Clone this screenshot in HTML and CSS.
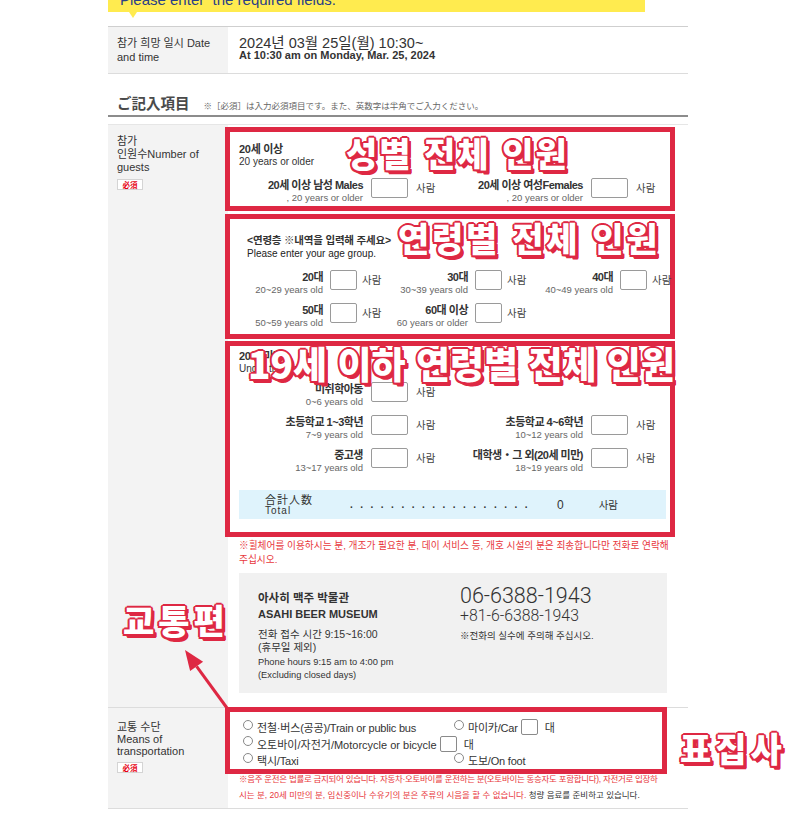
FILE: index.html
```html
<!DOCTYPE html>
<html lang="ko">
<head>
<meta charset="utf-8">
<title>참가 신청</title>
<link rel="stylesheet" href="styles.css">
</head>
<body>
<div class="page">
  <div class="alert">Please enter&nbsp; the required fields.</div>

  <div class="row row-date">
    <div class="label">참가 희망 일시 Date<br>and time</div>
    <div class="value date">
      <div class="date-ko">2024년 03월 25일(월) 10:30~</div>
      <div class="date-en">At 10:30 am on Monday, Mar. 25, 2024</div>
    </div>
  </div>

  <div class="section-head">
    <h2>ご記入項目</h2>
    <span class="head-note">※［必須］は入力必須項目です。また、英数字は半角でご入力ください。</span>
  </div>

  <div class="row row-guests">
    <div class="label">참가<br>인원수Number of<br>guests<span class="req">必須</span></div>
    <div class="value guests">
      <div class="mark box-adult">
        <div class="head"><b>20세 이상</b><span>20 years or older</span></div>
        <div class="pairs two">
          <div class="pair"><div class="lbl"><b>20세 이상 남성 Males</b><small>, 20 years or older</small></div><span class="inp"></span><span class="unit">사람</span></div>
          <div class="pair"><div class="lbl"><b>20세 이상 여성Females</b><small>, 20 years or older</small></div><span class="inp"></span><span class="unit">사람</span></div>
        </div>
      </div>

      <div class="mark box-age">
        <div class="head age-head"><b>&lt;연령층 ※내역을 입력해 주세요&gt;</b><span>Please enter your age group.</span></div>
        <div class="pairs three first">
          <div class="pair"><div class="lbl"><b>20대</b><small>20~29 years old</small></div><span class="inp"></span><span class="unit">사람</span></div>
          <div class="pair"><div class="lbl"><b>30대</b><small>30~39 years old</small></div><span class="inp"></span><span class="unit">사람</span></div>
          <div class="pair"><div class="lbl"><b>40대</b><small>40~49 years old</small></div><span class="inp"></span><span class="unit">사람</span></div>
        </div>
        <div class="pairs three">
          <div class="pair"><div class="lbl"><b>50대</b><small>50~59 years old</small></div><span class="inp"></span><span class="unit">사람</span></div>
          <div class="pair"><div class="lbl"><b>60대 이상</b><small>60 years or older</small></div><span class="inp"></span><span class="unit">사람</span></div>
        </div>
      </div>

      <div class="mark box-child">
        <div class="head"><b>20세 미만</b><span>Under the age of 20</span></div>
        <div class="pairs two first">
          <div class="pair"><div class="lbl"><b>미취학아동</b><small>0~6 years old</small></div><span class="inp"></span><span class="unit">사람</span></div>
        </div>
        <div class="pairs two">
          <div class="pair"><div class="lbl"><b>초등학교 1~3학년</b><small>7~9 years old</small></div><span class="inp"></span><span class="unit">사람</span></div>
          <div class="pair"><div class="lbl"><b>초등학교 4~6학년</b><small>10~12 years old</small></div><span class="inp"></span><span class="unit">사람</span></div>
        </div>
        <div class="pairs two">
          <div class="pair"><div class="lbl"><b>중고생</b><small>13~17 years old</small></div><span class="inp"></span><span class="unit">사람</span></div>
          <div class="pair"><div class="lbl"><b>대학생・그 외(20세 미만)</b><small>18~19 years old</small></div><span class="inp"></span><span class="unit">사람</span></div>
        </div>
        <div class="total">
          <div class="total-lbl"><span class="t-ja">合計人数</span><span class="t-en">Total</span></div>
          <span class="dots">..................</span>
          <span class="t-num">0</span>
          <span class="t-unit">사람</span>
        </div>
      </div>

      <p class="wnote">※휠체어를 이용하시는 분, 개조가 필요한 분, 데이 서비스 등, 개호 시설의 분은 죄송합니다만 전화로 연락해<br>주십시오.</p>

      <div class="contact">
        <div class="c-left">
          <div class="c-name">아사히 맥주 박물관</div>
          <div class="c-en">ASAHI BEER MUSEUM</div>
          <div class="c-hours">전화 접수 시간 9:15~16:00<br>(휴무일 제외)</div>
          <div class="c-hours-en">Phone hours 9:15 am to 4:00 pm<br>(Excluding closed days)</div>
        </div>
        <div class="c-right">
          <div class="c-tel">06-6388-1943</div>
          <div class="c-tel2">+81-6-6388-1943</div>
          <div class="c-note">※전화의 실수에 주의해 주십시오.</div>
        </div>
      </div>
    </div>
  </div>

  <div class="row row-trans">
    <div class="label lbl-trans">교통 수단<br>Means of<br>transportation<span class="req">必須</span></div>
    <div class="value trans">
      <div class="mark box-trans">
        <div class="opts">
          <div class="opt"><span class="radio"></span>전철·버스(공공)/Train or public bus</div>
          <div class="opt"><span class="radio"></span>마이카/Car<span class="sinp"></span><span class="dae">대</span></div>
          <div class="opt wide"><span class="radio"></span>오토바이/자전거/Motorcycle or bicycle<span class="sinp"></span><span class="dae">대</span></div>
          <div class="opt"><span class="radio"></span>택시/Taxi</div>
          <div class="opt"><span class="radio"></span>도보/On foot</div>
        </div>
      </div>
      <p class="tnote"><span class="red"><span class="tight">※음주 운전은 법률로 금지되어 있습니다. 자동차·오토바이를 운전하는 분(오토바이는 동승자도 포함합니다), 자전거로 입장하</span><br>시는 분, 20세 미만의 분, 임신중이나 수유기의 분은 주류의 시음을 할 수 없습니다.</span> 청량 음료를 준비하고 있습니다.</p>
    </div>
  </div>
</div>

<div class="anno a-gender">성별 전체 인원</div>
<div class="anno a-age">연령별 전체 인원</div>
<div class="anno a-child">19세 이하 연령별 전체 인원</div>
<div class="anno a-trans">교통편</div>
<div class="anno a-sample">표집사</div>
<svg class="arrow" width="60" height="72" viewBox="0 0 60 72">
  <line x1="52" y1="68" x2="21.6" y2="26.3" stroke="#de2843" stroke-width="3"/>
  <polygon points="10,10 28.1,21.7 15.1,30.9" fill="#de2843"/>
</svg>
</body>
</html>
```

FILE: styles.css
```css
* { box-sizing: border-box; }
html, body { margin: 0; padding: 0; background: #fff; }
body {
  font-family: "Liberation Sans", "Noto Sans CJK KR", sans-serif;
  color: #333;
}
.page { width: 688px; padding-left: 108px; }

.alert {
  position: relative;
  width: 537px;
  height: 12px;
  margin-bottom: 14px;
  padding-left: 12px;
  background: #ffeb4f;
  color: #2a3f86;
  font-size: 15px;
  line-height: 0;
  white-space: nowrap;
}
.alert::after {
  content: "";
  position: absolute;
  left: 21px;
  top: 12px;
  border-left: 4px solid transparent;
  border-right: 4px solid transparent;
  border-top: 6px solid #ffeb4f;
}

.row { display: flex; width: 580px; }
.label {
  width: 120px;
  flex: none;
  background: #f3f3f3;
  padding: 9px 9px;
  font-size: 11px;
  line-height: 14px;
  color: #333;
}
.value { flex: 1; padding-left: 11px; }

.row-date { border-top: 1px solid #cfcfcf; border-bottom: 1px solid #dcdcdc; }
.date { padding-top: 10px; }
.date-ko { font-size: 14.5px; line-height: 13px; color: #333; }
.date-en { font-size: 11px; line-height: 11px; font-weight: bold; color: #333; }

.section-head {
  display: flex;
  align-items: baseline;
  width: 580px;
  margin-top: 19px;
  padding: 0 0 2px 9px;
  border-bottom: 2px solid #8c8c8c;
}
.section-head h2 {
  margin: 0;
  font-family: "Noto Sans CJK JP", sans-serif;
  font-size: 14.5px;
  line-height: 20px;
  font-weight: 700;
  color: #4a4a4a;
}
.head-note {
  margin-left: 14px;
  font-family: "Liberation Sans", "Noto Sans CJK JP", sans-serif;
  font-size: 8.5px;
  color: #666;
}

.row-guests { margin-top: 7px; border-top: 1px solid #e6e6e6; border-bottom: 1px solid #dcdcdc; }
.row-guests .label { padding-top: 10px; line-height: 13px; }
.req {
  display: block;
  width: 26px;
  height: 11px;
  margin-top: 5px;
  border: 1px solid #d4d4d4;
  background: #fff;
  color: #e60012;
  font-family: "Noto Sans CJK JP", sans-serif;
  font-size: 7.5px;
  font-weight: bold;
  line-height: 9px;
  text-align: center;
}
.guests { padding-left: 0; padding-bottom: 14px; }

.mark {
  position: relative;
  z-index: 1;
  margin-left: -3px;
  border: 5px solid #de2843;
}
.box-adult { width: 450px; margin-top: 2px; padding: 11px 4px 3px 9px; }
.box-age { width: 450px; margin-top: 3px; padding: 15px 4px 6px 9px; }
.box-child { width: 450px; margin-top: 2px; padding: 4px 4px 13px 9px; }

.head b { display: block; font-size: 11px; line-height: 13px; color: #333; letter-spacing: -0.3px; }
.head span { display: block; font-size: 10px; line-height: 12px; color: #333; }
.age-head { margin-left: 8px; }
.age-head b { font-size: 10.5px; letter-spacing: -0.2px; }
.age-head span { line-height: 13px; color: #222; }

.pairs { display: grid; margin-top: 7px; }
.box-adult .pairs { margin-top: 10px; }
.box-age .pairs { margin-top: 8px; }
.box-age .pairs.first { margin-top: 10px; }
.box-child .pairs { margin-top: 8px; }
.box-child .pairs.first { margin-top: 7px; }
.pairs.two { grid-template-columns: 220px 220px; }
.pairs.three { grid-template-columns: 145px 145px 145px; }

.pair { display: flex; align-items: flex-start; }
.lbl { width: 124px; flex: none; text-align: right; padding-top: 1px; white-space: nowrap; }
.three .lbl { width: 84px; }
.lbl b { display: block; font-size: 11px; line-height: 13px; font-weight: bold; letter-spacing: -0.5px; color: #333; }
.lbl small { display: block; font-size: 9.5px; line-height: 11px; color: #666; }
.inp {
  flex: none;
  width: 37px;
  height: 20px;
  margin-left: 8px;
  border: 1px solid #9a9a9a;
  border-radius: 2px;
  background: #fff;
}
.three .inp { width: 27px; margin-left: 7px; }
.unit { margin-left: 8px; font-size: 10.5px; line-height: 21px; color: #444; white-space: nowrap; }
.three .unit { margin-left: 5px; }

.total {
  display: flex;
  align-items: center;
  height: 29px;
  margin-top: 17px;
  padding-left: 26px;
  background: #dff3fc;
  color: #333;
}
.total-lbl { width: 85px; flex: none; }
.t-ja { display: block; font-family: "Noto Sans CJK JP", sans-serif; font-size: 11px; line-height: 12px; letter-spacing: 1px; }
.t-en { display: block; font-size: 10px; line-height: 11px; letter-spacing: 1px; }
.dots { font-size: 10px; font-weight: bold; letter-spacing: 7.5px; line-height: 12px; }
.t-num { margin-left: 22px; font-size: 12px; }
.t-unit { margin-left: 35px; font-size: 10.5px; }

.wnote {
  margin: 2px 0 0 11px;
  color: #e8383d;
  font-size: 9.7px;
  line-height: 14px;
  white-space: nowrap;
}

.contact {
  display: flex;
  width: 428px;
  margin: 6px 0 0 11px;
  padding: 12px 0 11px 19px;
  background: #f1f1f1;
  color: #333;
}
.c-left { width: 202px; flex: none; padding-top: 5px; }
.c-name { font-size: 11.5px; font-weight: bold; line-height: 16px; }
.c-en { font-size: 11px; font-weight: bold; line-height: 16px; }
.c-hours { margin-top: 6px; font-size: 10.5px; line-height: 13px; }
.c-hours-en { margin-top: 2px; font-size: 9.3px; line-height: 13px; }
.c-tel { font-family: Roboto, "Liberation Sans", sans-serif; font-weight: 300; font-size: 21.5px; line-height: 22px; }
.c-tel2 { font-family: Roboto, "Liberation Sans", sans-serif; font-weight: 300; font-size: 15.8px; line-height: 18px; }
.c-note { margin-top: 4px; font-size: 9.5px; line-height: 14px; }

.row-trans { border-bottom: 1px solid #dcdcdc; }
.lbl-trans { padding-top: 13px; line-height: 12px; }
.trans { padding-left: 0; padding-bottom: 5px; }
.box-trans { width: 442px; margin-top: -1px; padding: 7px 0 0 13px; }
.opts { display: grid; grid-template-columns: 211px auto; }
.opt {
  display: flex;
  align-items: center;
  height: 16.5px;
  font-size: 11px;
  letter-spacing: -0.2px;
  color: #333;
  white-space: nowrap;
}
.opt.wide { grid-column: 1 / 3; letter-spacing: 0; }
.radio {
  flex: none;
  width: 10px;
  height: 10px;
  margin: 0 4px 5px 0;
  border: 1px solid #888;
  border-radius: 50%;
  background: #fff;
}
.sinp {
  flex: none;
  width: 17px;
  height: 16px;
  margin-left: 3px;
  border: 1px solid #8a8a8a;
  border-radius: 2px;
  background: #fff;
}
.dae { margin-left: 7px; }
.tnote {
  margin: -3px 0 0 11px;
  font-size: 8.5px;
  line-height: 16px;
  color: #333;
  white-space: nowrap;
}
.tnote .red { color: #e8383d; }
.tnote .tight { letter-spacing: -0.3px; }

.anno {
  position: absolute;
  font-family: "Noto Sans CJK KR", sans-serif;
  font-weight: 900;
  color: #fff;
  line-height: 1;
  white-space: nowrap;
  font-size: 34px;
  z-index: 5;
  text-shadow:
    2px 0 0 #de2843, -2px 0 0 #de2843, 0 2px 0 #de2843, 0 -2px 0 #de2843,
    1.5px 1.5px 0 #de2843, -1.5px 1.5px 0 #de2843, 1.5px -1.5px 0 #de2843, -1.5px -1.5px 0 #de2843,
    2.5px 2.5px 0 #de2843, 3px 3px 0 #de2843, 3.5px 3px 0 #de2843, 3px 3.5px 0 #de2843;
}
.a-gender { left: 346px; top: 136px; letter-spacing: 2px; }
.a-age { left: 398px; top: 221px; letter-spacing: 2.7px; }
.a-child { left: 248px; top: 345px; font-size: 37px; }
.a-trans { left: 123px; top: 603px; letter-spacing: 4px; }
.a-sample { left: 680px; top: 731px; letter-spacing: 4px; }
.arrow { position: absolute; left: 175px; top: 640px; z-index: 5; }
```
